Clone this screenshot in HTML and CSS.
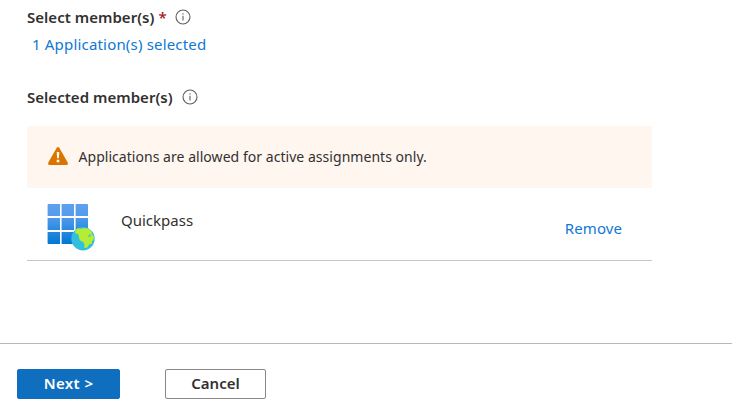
FILE: index.html
```html
<!DOCTYPE html>
<html lang="en">
<head>
<meta charset="utf-8">
<title>Add assignments</title>
<link rel="stylesheet" href="styles.css">
</head>
<body>
<main class="content">
  <div class="label label-select"><span class="label-text">Select member(s)</span><span class="required">*</span>
    <svg class="info" viewBox="0 0 16 16"><circle cx="8" cy="8" r="7"/><path d="M8 6.8V11.6M8 4.2V5.4"/></svg>
  </div>
  <a class="link picker">1 Application(s) selected</a>
  <div class="label label-selected"><span class="label-text">Selected member(s)</span>
    <svg class="info" viewBox="0 0 16 16"><circle cx="8" cy="8" r="7"/><path d="M8 6.8V11.6M8 4.2V5.4"/></svg>
  </div>
  <div class="notice">
    <svg class="warning" viewBox="0 0 20 18"><path class="triangle" d="M8.7.8Q10-.7 11.3.8L19.7 15.5Q20.4 18 18.4 18H1.6Q-.4 18 .3 15.5Z"/><path class="mark" d="M8.7 5h2.6l-.4 6.2H9.1ZM8.7 12.7h2.6v2.5H8.7Z"/></svg>
    <span class="notice-text">Applications are allowed for active assignments only.</span>
  </div>
  <div class="member">
    <svg class="app-icon" viewBox="0 0 50 50">
      <defs><linearGradient id="tiles" gradientUnits="userSpaceOnUse" x1="0" y1="1" x2="0" y2="41"><stop offset="0" stop-color="#5ea0ef"/><stop offset=".3" stop-color="#559cec"/><stop offset="1" stop-color="#0078d4"/></linearGradient></defs>
      <path fill="url(#tiles)" d="M1.6 1H13V13H.6V2Q.6 1 1.6 1ZM14.6 1H27V13H14.6ZM28.6 1H40Q41 1 41 2V13H28.6ZM.6 15H13V27H.6ZM14.6 15H27V27H14.6ZM28.6 15H41V27H28.6ZM.6 29H13V41H1.6Q.6 41 .6 40ZM14.6 29H27V41H14.6ZM28.6 29H41V41H28.6Z"/>
      <circle cx="36" cy="35.8" r="11.7" fill="#32bedd"/>
      <path fill="#b4ec36" d="M28.4 26.4L31 25.2L34 25.7L37.5 25L41 25.5L43.5 27L45.3 30L44.2 31.3L45.8 31.7L46.8 33.5L46.8 36.2L44.8 38.6L45 40.8L42.4 41.2L40 44.8L37.4 45L37.5 41.4L36.4 39.2L33.2 37.6L32 35.2L31.7 32.2L30.6 30.8L28.3 30.8Z"/>
      <path fill="#32bedd" d="M40.8 33.4L42.8 31.2L44.2 32.2L42.2 33.8Z"/>
    </svg>
    <span class="member-name">Quickpass</span>
    <a class="link remove">Remove</a>
  </div>
</main>
<footer class="actions">
  <button class="button primary"><span>Next &gt;</span></button>
  <button class="button secondary"><span>Cancel</span></button>
</footer>
</body>
</html>
```

FILE: styles.css
```css
* { box-sizing: border-box; }
body {
  margin: 0;
  height: 401px;
  overflow: hidden;
  display: flex;
  flex-direction: column;
  background: #fff;
  color: #323130;
  font: 15px/20px "Noto Sans", "Open Sans", sans-serif;
  white-space: nowrap;
}
.content { height: 343px; width: 652px; padding: 7px 0 0 27px; flex: none; }
.label { display: flex; align-items: center; height: 20px; font-weight: 600; letter-spacing: .03px; }
.label-selected { margin-top: 33px; }
.required { color: #a4262c; margin-left: 4px; }
.info { width: 16px; height: 16px; margin-left: 8.5px; fill: none; stroke: #605e5c; stroke-width: 1.1; }
.label-selected .info { margin-left: 9.5px; }
.link { color: #0f78d4; }
.picker { display: block; height: 20px; margin: 7px 0 0 5px; letter-spacing: .18px; }
.notice {
  height: 62px;
  margin-top: 19px;
  padding-left: 21px;
  display: flex;
  align-items: center;
  border-radius: 2px;
  background: #fff6f0;
}
.warning { width: 20px; height: 18px; margin: 0 10.5px 2px 0; }
.triangle { fill: #db7500; }
.mark { fill: #fff; }
.notice-text { font-size: 14px; letter-spacing: .04px; }
.member { height: 73px; display: flex; align-items: flex-start; border-bottom: 1px solid #c8c6c4; }
.app-icon { width: 50px; height: 50px; margin: 15px 0 0 20px; }
.member-name { margin: 22px 0 0 24px; }
.remove { margin: 30px 30px 0 auto; letter-spacing: .08px; }
.actions { flex: 1; border-top: 1px solid #b8b8b8; display: flex; align-items: flex-start; gap: 45px; padding: 25px 0 0 17px; }
.button { height: 30px; padding: 0 0 2px; border-radius: 2px; font: 600 15px/20px "Noto Sans", "Open Sans", sans-serif; }
.primary { width: 103px; border: 1px solid #106ebe; background: #106ebe; color: #fff; letter-spacing: .4px; }
.secondary { width: 101px; border: 1px solid #8a8886; background: #fff; color: #323130; }
```
